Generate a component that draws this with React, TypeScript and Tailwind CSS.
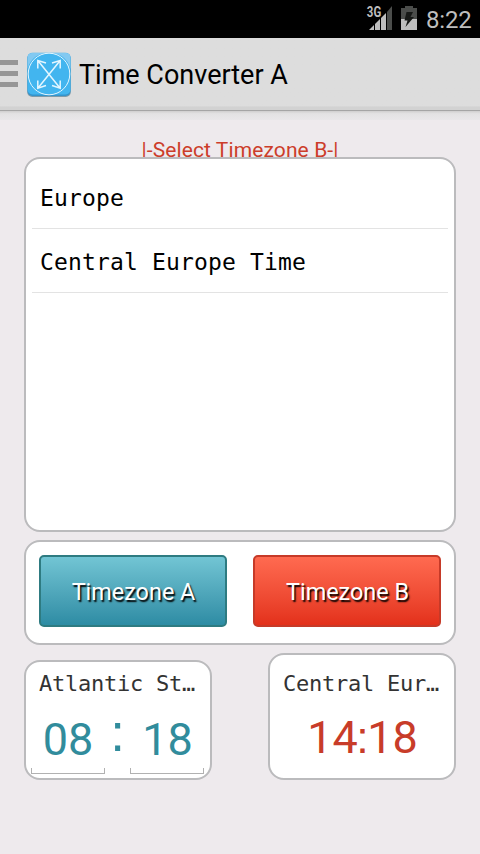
const panel = 'rounded-[16px] border-2 border-[#bbbbbd] bg-white';
const mono = "font-['DejaVu_Sans_Mono',monospace] whitespace-pre";

function StatusBar() {
  return (
    <div className="flex h-[38px] shrink-0 justify-end bg-black">
      <svg width="60" height="38" viewBox="0 0 60 38" className="shrink-0">
        <g fill="#bebebe">
          <path d="M9 30L14 25V30Z" />
          <path d="M15 24L20 19V30H15Z" />
          <path d="M21 18L26 13V30H21Z" />
        </g>
        <path d="M27 12L32 6V30H27Z" fill="#4b4d4b" />
        <text x="6.8" y="17.2" fontSize="14.5" fontWeight="700" fill="#bebebe" textLength="14.4" lengthAdjust="spacingAndGlyphs" fontFamily="Roboto, sans-serif">3G</text>
        <path d="M41 8H45V6H53V8H57V19H41Z" fill="#4b4d4b" />
        <path d="M41 19H57V30H41Z" fill="#bebebe" />
        <path d="M46.5 12H53L50.5 17H54L45.5 27L47.5 20.5H44.5Z" fill="#171917" />
      </svg>
      <div className="ml-[6px] w-[54px] text-[24px] leading-[40px] tracking-[-0.2px] text-[#bebebe]">8:22</div>
    </div>
  );
}

function ActionBar() {
  return (
    <header className="h-[82px] shrink-0 bg-[#e5e4e5]">
      <div className="flex h-[73px] items-start border-b border-[#a5a5a5] bg-linear-to-b from-[#dddddd] from-[94%] to-[#d2d2d2] to-[96%]">
        <div className="mt-[22px] flex w-[18px] flex-col gap-[6px]">
          <div className="h-[5px] bg-[#969696]" />
          <div className="h-[5px] bg-[#969696]" />
          <div className="h-[5px] bg-[#969696]" />
        </div>
        <svg width="46" height="48" viewBox="0 0 46 48" className="mt-[13px] ml-[8px]">
          <rect x="1.2" y="3" width="43.6" height="43" rx="5" fill="#7f9ba8" />
          <rect x="1.5" y="2" width="43" height="43" rx="5" fill="#3494cc" />
          <rect x="1.5" y="1.8" width="43" height="41.7" rx="5" fill="#42b5ef" />
          <path d="M1.5 18V7Q1.5 2 6.5 2H39.5Q44.5 2 44.5 7V18Q40 2 23 2Q6 2 1.5 18Z" fill="#82c9f1" />
          <g fill="none" stroke="#e3f6ff" strokeWidth="1.5">
            <circle cx="23" cy="23" r="20.8" strokeWidth="1" />
            <path d="M12 9.8L34 37M34 9.8L12 37M11.8 17.5V9.6L20 12M26 12L34.2 9.6V17.5M11.8 29.5V37.2L20 34.5M26 34.5L34.2 37.2V29.5" />
          </g>
        </svg>
        <h1 className="ml-[7px] text-[27px] leading-[74px] whitespace-nowrap text-black">Time Converter A</h1>
      </div>
      <div className="h-[9px] bg-linear-to-b from-[#cfcece] via-[#e3e2e3] via-30% to-[#e9e7e9]" />
    </header>
  );
}

function Underline() {
  return <div className="h-[6px] w-[74px] border border-t-0 border-[#b1b1b1]" />;
}

export default function App() {
  return (
    <div className="flex h-[854px] w-[480px] flex-col overflow-hidden bg-[#eeeaed] font-[Roboto,sans-serif]">
      <StatusBar />
      <ActionBar />
      <main className="flex flex-col px-[24px]">
        <div className="h-[37px] pt-[18px] text-center text-[21px] leading-[25px] tracking-[0.1px] text-[#cc3d2a]">|-Select Timezone B-|</div>
        <section className={`${panel} relative h-[375px] px-[6px] pt-[6px]`}>
          <div className={`${mono} h-[64px] border-b border-[#e3e3e3] pl-[8px] text-[23px] leading-[66px] tracking-[0.15px] text-black`}>Europe</div>
          <div className={`${mono} h-[64px] border-b border-[#e3e3e3] pl-[8px] text-[23px] leading-[66px] tracking-[0.15px] text-black`}>Central Europe Time</div>
        </section>
        <section className={`${panel} mt-[8px] flex h-[105px] justify-between px-[13px] pt-[13px]`}>
          <button className="h-[72px] w-[188px] rounded-[5px] border-2 border-[#2e7b81] bg-linear-to-b from-[#72c5d4] to-[#2d8ca4] pt-[4px] pl-[1px] text-[23.4px] text-white [text-shadow:1.5px_1.5px_1.5px_#000]">Timezone A</button>
          <button className="h-[72px] w-[188px] rounded-[5px] border-2 border-[#c63a28] bg-linear-to-b from-[#ff6a50] to-[#e3301a] pt-[4px] pl-[1px] text-[23.4px] text-white [text-shadow:1.5px_1.5px_1.5px_#000]">Timezone B</button>
        </section>
        <div className="mt-[8px] flex items-end justify-between">
          <section className={`${panel} flex h-[120px] w-[188px] flex-col`}>
            <div className={`${mono} h-[42px] pl-[13px] text-[22px] leading-[43px] tracking-[-0.24px] text-[#333]`}>Atlantic St…</div>
            <div className="flex h-[64px] px-[5px] text-center text-[45px] leading-[72px] text-[#318c9c]">
              <div className="w-[75px]">08</div>
              <div className="flex w-[25px] justify-center font-['Liberation_Sans',sans-serif] text-[53px] leading-[57px]">:</div>
              <div className="w-[76px]">18</div>
            </div>
            <div className="flex justify-between pr-[6px] pl-[5px]">
              <Underline />
              <Underline />
            </div>
          </section>
          <section className={`${panel} h-[127px] w-[188px]`}>
            <div className={`${mono} h-[49px] pl-[13px] text-[22px] leading-[57px] tracking-[-0.24px] text-[#333]`}>Central Eur…</div>
            <div className="flex justify-center pl-[1px] text-[45px] leading-[68px] text-[#c83c29]">
              14<span className="-mx-[1.5px] font-['Liberation_Sans',sans-serif]">:</span>18
            </div>
          </section>
        </div>
      </main>
    </div>
  );
}
